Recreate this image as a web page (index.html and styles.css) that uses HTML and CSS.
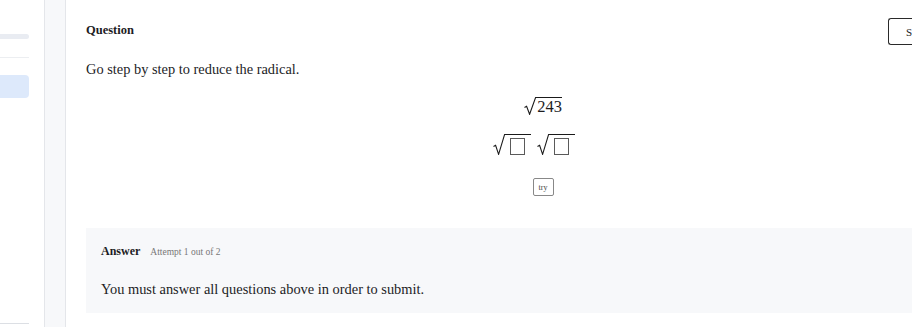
FILE: index.html
```html
<!DOCTYPE html>
<html>
<head>
<meta charset="utf-8">
<link rel="stylesheet" href="styles.css">
</head>
<body>
<div class="page">
  <aside class="sidebar">
    <div class="sb-bar"></div>
    <div class="sb-line"></div>
    <div class="sb-active"></div>
    <div class="sb-spacer"></div>
    <div class="sb-bottom"></div>
  </aside>
  <div class="gutter"></div>
  <main class="content">
    <div class="q-head">
      <span class="q-title">Question</span>
      <button class="top-btn">S</button>
    </div>
    <p class="prompt">Go step by step to reduce the radical.</p>
    <div class="math">
      <div class="math-row first">
        <svg class="rad-svg big" viewBox="0 0 12 18" width="12" height="18"><path d="M0.5 10.5 L2.6 9.3 L5.6 17.3 L11.6 0.5 L12 0.5" fill="none" stroke="#1a1a1a" stroke-width="1.1"/></svg><span class="radicand num">243</span>
      </div>
      <div class="math-row second">
        <svg class="rad-svg" viewBox="0 0 12 21" width="12" height="21"><path d="M0.5 12.5 L2.6 11.3 L5.6 20.3 L11.6 0.5 L12 0.5" fill="none" stroke="#1a1a1a" stroke-width="1.1"/></svg><span class="radicand slot"><span class="box"></span></span>
        <svg class="rad-svg gap" viewBox="0 0 12 21" width="12" height="21"><path d="M0.5 12.5 L2.6 11.3 L5.6 20.3 L11.6 0.5 L12 0.5" fill="none" stroke="#1a1a1a" stroke-width="1.1"/></svg><span class="radicand slot"><span class="box"></span></span>
      </div>
      <div class="math-row third">
        <button class="try">try</button>
      </div>
    </div>
    <section class="answer">
      <div class="a-head"><span class="a-title">Answer</span><span class="attempt">Attempt 1 out of 2</span></div>
      <p class="a-msg">You must answer all questions above in order to submit.</p>
    </section>
  </main>
</div>
</body>
</html>
```
FILE: styles.css
```css
* { box-sizing: border-box; }
html, body { margin: 0; padding: 0; background: #fff; }
body { font-family: "Liberation Serif", "DejaVu Serif", serif; color: #1d1d1f; overflow: hidden; width: 912px; height: 327px; }
.page { display: flex; width: 912px; height: 327px; overflow: hidden; }
.sidebar { width: 45px; flex: none; border-right: 1px solid #e4e6ea; display: flex; flex-direction: column; padding-top: 34px; }
.sb-bar { width: 29px; height: 5px; background: #e9ecf2; border-radius: 0 3px 3px 0; }
.sb-line { width: 29px; height: 1px; background: #eceef1; margin-top: 18px; }
.sb-active { width: 29px; height: 23px; background: #dde9fb; border-radius: 0 4px 4px 0; margin-top: 17px; }
.sb-spacer { flex: 1; }
.sb-bottom { width: 29px; height: 1px; background: #dcdfe4; margin-bottom: 3px; }
.gutter { width: 21px; flex: none; background: #f7f8fa; border-right: 1px solid #e4e6ea; }
.content { flex: 1; min-width: 0; padding: 0 0 0 20px; display: flex; flex-direction: column; }
.q-head { display: flex; align-items: flex-start; height: 45px; padding-top: 18px; }
.q-title { font-weight: bold; font-size: 12.5px; margin-top: 5px; flex: 1; }
.top-btn { width: 24px; height: 27px; border: 1.5px solid #2a2a2a; border-right: none; border-radius: 3px 0 0 3px; background: #fff; font-family: inherit; font-size: 11px; text-align: right; padding: 0; color: #222; overflow: hidden; white-space: nowrap; }
.prompt { margin: 15px 0 0 0; font-size: 14.4px; line-height: 18px; }
.math { display: flex; flex-direction: column; align-items: center; padding-left: 88px; }
.math-row { display: flex; align-items: flex-end; }
.math-row.first { margin-top: 19px; }
.rad-svg { display: block; flex: none; }
.radicand { border-top: 1.1px solid #1a1a1a; }
.num { font-size: 16.5px; line-height: 16px; height: 18px; padding: 1px 0 0 1px; }
.math-row.second { margin-top: 19px; padding-right: 18px; }
.slot { height: 21px; padding: 3px 6px 0 5px; }
.rad-svg.gap { margin-left: 6px; }
.box { display: block; width: 15px; height: 17px; border: 1.5px solid #5a5a5a; }
.math-row.third { margin-top: 23px; }
.try { font-family: "Liberation Serif", serif; font-size: 8px; color: #444; background: #fff; border: 1px solid #888; border-radius: 2px; width: 21px; height: 18px; padding: 0; }
.answer { margin-top: 32px; background: #f7f8fa; height: 85px; padding: 16px 15px; }
.a-head { display: flex; align-items: baseline; }
.a-title { font-weight: bold; font-size: 12px; }
.attempt { font-size: 9.5px; color: #777; margin-left: 10px; }
.a-msg { margin: 21px 0 0 0; font-size: 14.4px; line-height: 18px; }
```
